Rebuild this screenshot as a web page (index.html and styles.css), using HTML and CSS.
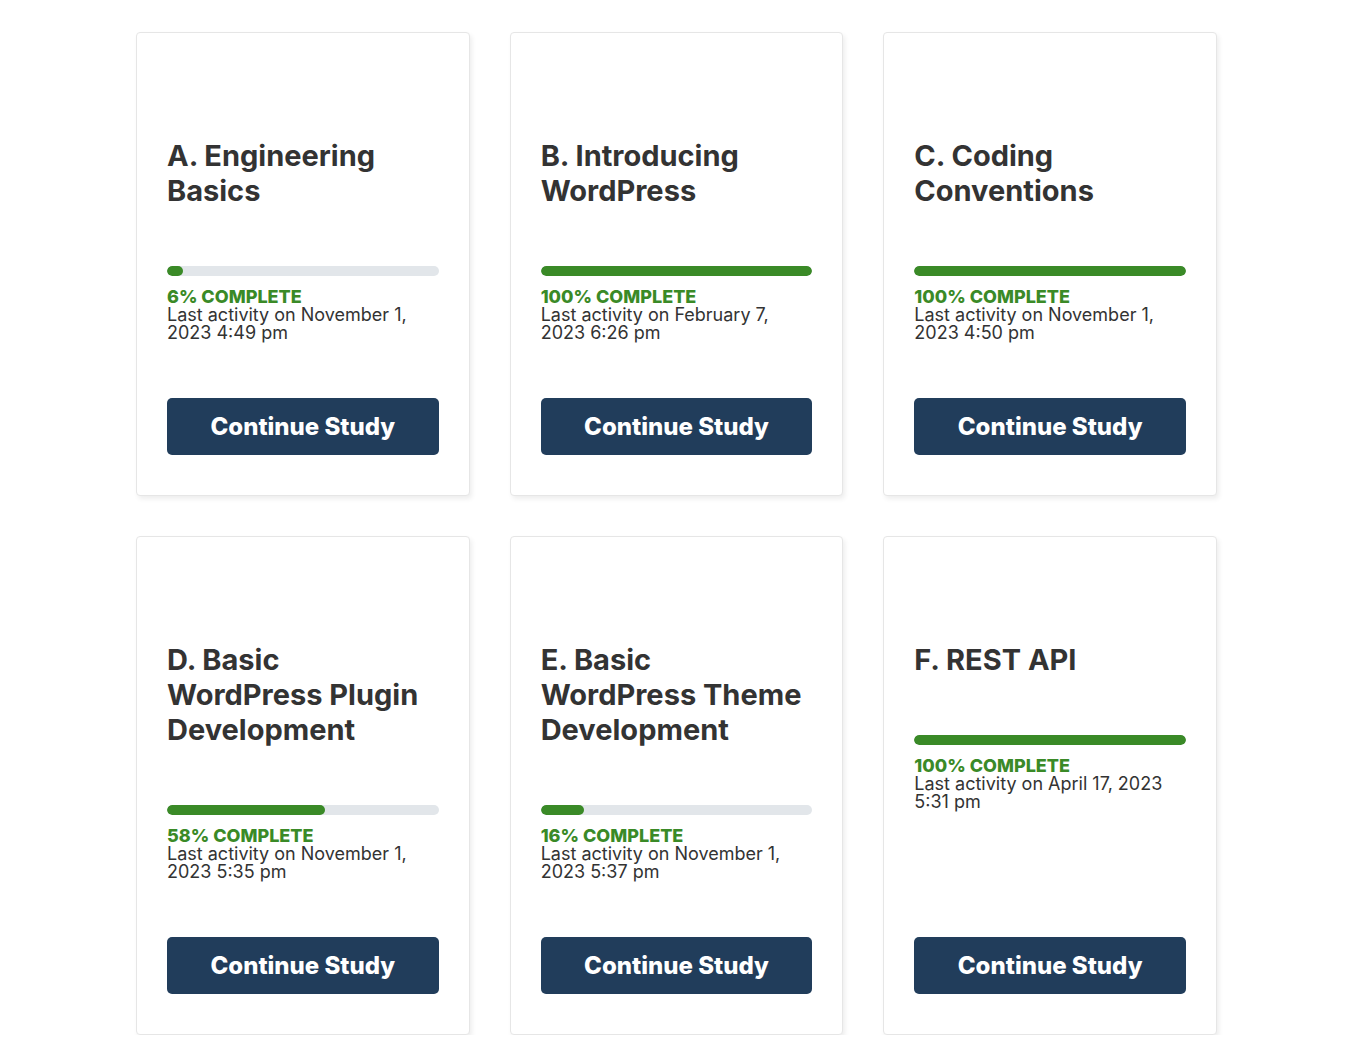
FILE: index.html
```html
<!DOCTYPE html>
<html lang="en">
<head>
  <meta charset="UTF-8">
  <meta name="viewport" content="width=device-width, initial-scale=1.0">
  <title>My Courses</title>
  <link rel="stylesheet" href="styles.css">
</head>
<body>
  <div class="course-grid">
    <div class="course-card">
      <div class="course-body">
        <h2 class="course-title">A. Engineering Basics</h2>
        <div class="progress"><div class="progress-fill" style="width: 6%;"></div></div>
        <div class="progress-label">6% COMPLETE</div>
        <div class="last-activity">Last activity on November 1, 2023 4:49 pm</div>
      </div>
      <a href="#" class="btn-continue">Continue Study</a>
    </div>

    <div class="course-card">
      <div class="course-body">
        <h2 class="course-title">B. Introducing WordPress</h2>
        <div class="progress"><div class="progress-fill" style="width: 100%;"></div></div>
        <div class="progress-label">100% COMPLETE</div>
        <div class="last-activity">Last activity on February 7, 2023 6:26 pm</div>
      </div>
      <a href="#" class="btn-continue">Continue Study</a>
    </div>

    <div class="course-card">
      <div class="course-body">
        <h2 class="course-title">C. Coding Conventions</h2>
        <div class="progress"><div class="progress-fill" style="width: 100%;"></div></div>
        <div class="progress-label">100% COMPLETE</div>
        <div class="last-activity">Last activity on November 1, 2023 4:50 pm</div>
      </div>
      <a href="#" class="btn-continue">Continue Study</a>
    </div>

    <div class="course-card">
      <div class="course-body">
        <h2 class="course-title">D. Basic WordPress Plugin Development</h2>
        <div class="progress"><div class="progress-fill" style="width: 58%;"></div></div>
        <div class="progress-label">58% COMPLETE</div>
        <div class="last-activity">Last activity on November 1, 2023 5:35 pm</div>
      </div>
      <a href="#" class="btn-continue">Continue Study</a>
    </div>

    <div class="course-card">
      <div class="course-body">
        <h2 class="course-title">E. Basic WordPress Theme Development</h2>
        <div class="progress"><div class="progress-fill" style="width: 16%;"></div></div>
        <div class="progress-label">16% COMPLETE</div>
        <div class="last-activity">Last activity on November 1, 2023 5:37 pm</div>
      </div>
      <a href="#" class="btn-continue">Continue Study</a>
    </div>

    <div class="course-card">
      <div class="course-body">
        <h2 class="course-title">F. REST API</h2>
        <div class="progress"><div class="progress-fill" style="width: 100%;"></div></div>
        <div class="progress-label">100% COMPLETE</div>
        <div class="last-activity">Last activity on April 17, 2023 5:31 pm</div>
      </div>
      <a href="#" class="btn-continue">Continue Study</a>
    </div>
  </div>
</body>
</html>
```

FILE: styles.css
```css
* {
  margin: 0;
  padding: 0;
  box-sizing: border-box;
}

body {
  font-family: Inter, 'Noto Sans', sans-serif;
  background: #fff;
  color: #333;
}

.course-grid {
  max-width: 1081px;
  margin: 32px auto 0;
  display: grid;
  grid-template-columns: repeat(3, 1fr);
  gap: 40px;
}

.course-card {
  display: flex;
  flex-direction: column;
  padding: 105px 30px 40px;
  border: 1px solid #e6e6e6;
  border-radius: 4px;
  background: #fff;
  box-shadow: 2px 3px 5px rgba(0, 0, 0, 0.07);
}

.course-body {
  flex: 1;
}

.course-title {
  font-size: 29px;
  line-height: 35px;
  font-weight: 700;
  color: #333;
  margin-bottom: 58px;
}

.progress {
  height: 10px;
  background: #e2e6ea;
  border-radius: 5px;
  overflow: hidden;
}

.progress-fill {
  height: 100%;
  background: #3a8a27;
  border-radius: 5px;
}

.progress-label {
  margin-top: 12px;
  font-size: 18px;
  line-height: 18px;
  font-weight: 800;
  color: #3a8a27;
}

.last-activity {
  font-size: 18px;
  line-height: 18px;
  color: #333;
}

.btn-continue {
  display: block;
  margin-top: 56px;
  height: 57px;
  line-height: 57px;
  text-align: center;
  background: #213d5b;
  color: #fff;
  font-size: 24px;
  font-weight: 800;
  text-decoration: none;
  border-radius: 5px;
}
```
